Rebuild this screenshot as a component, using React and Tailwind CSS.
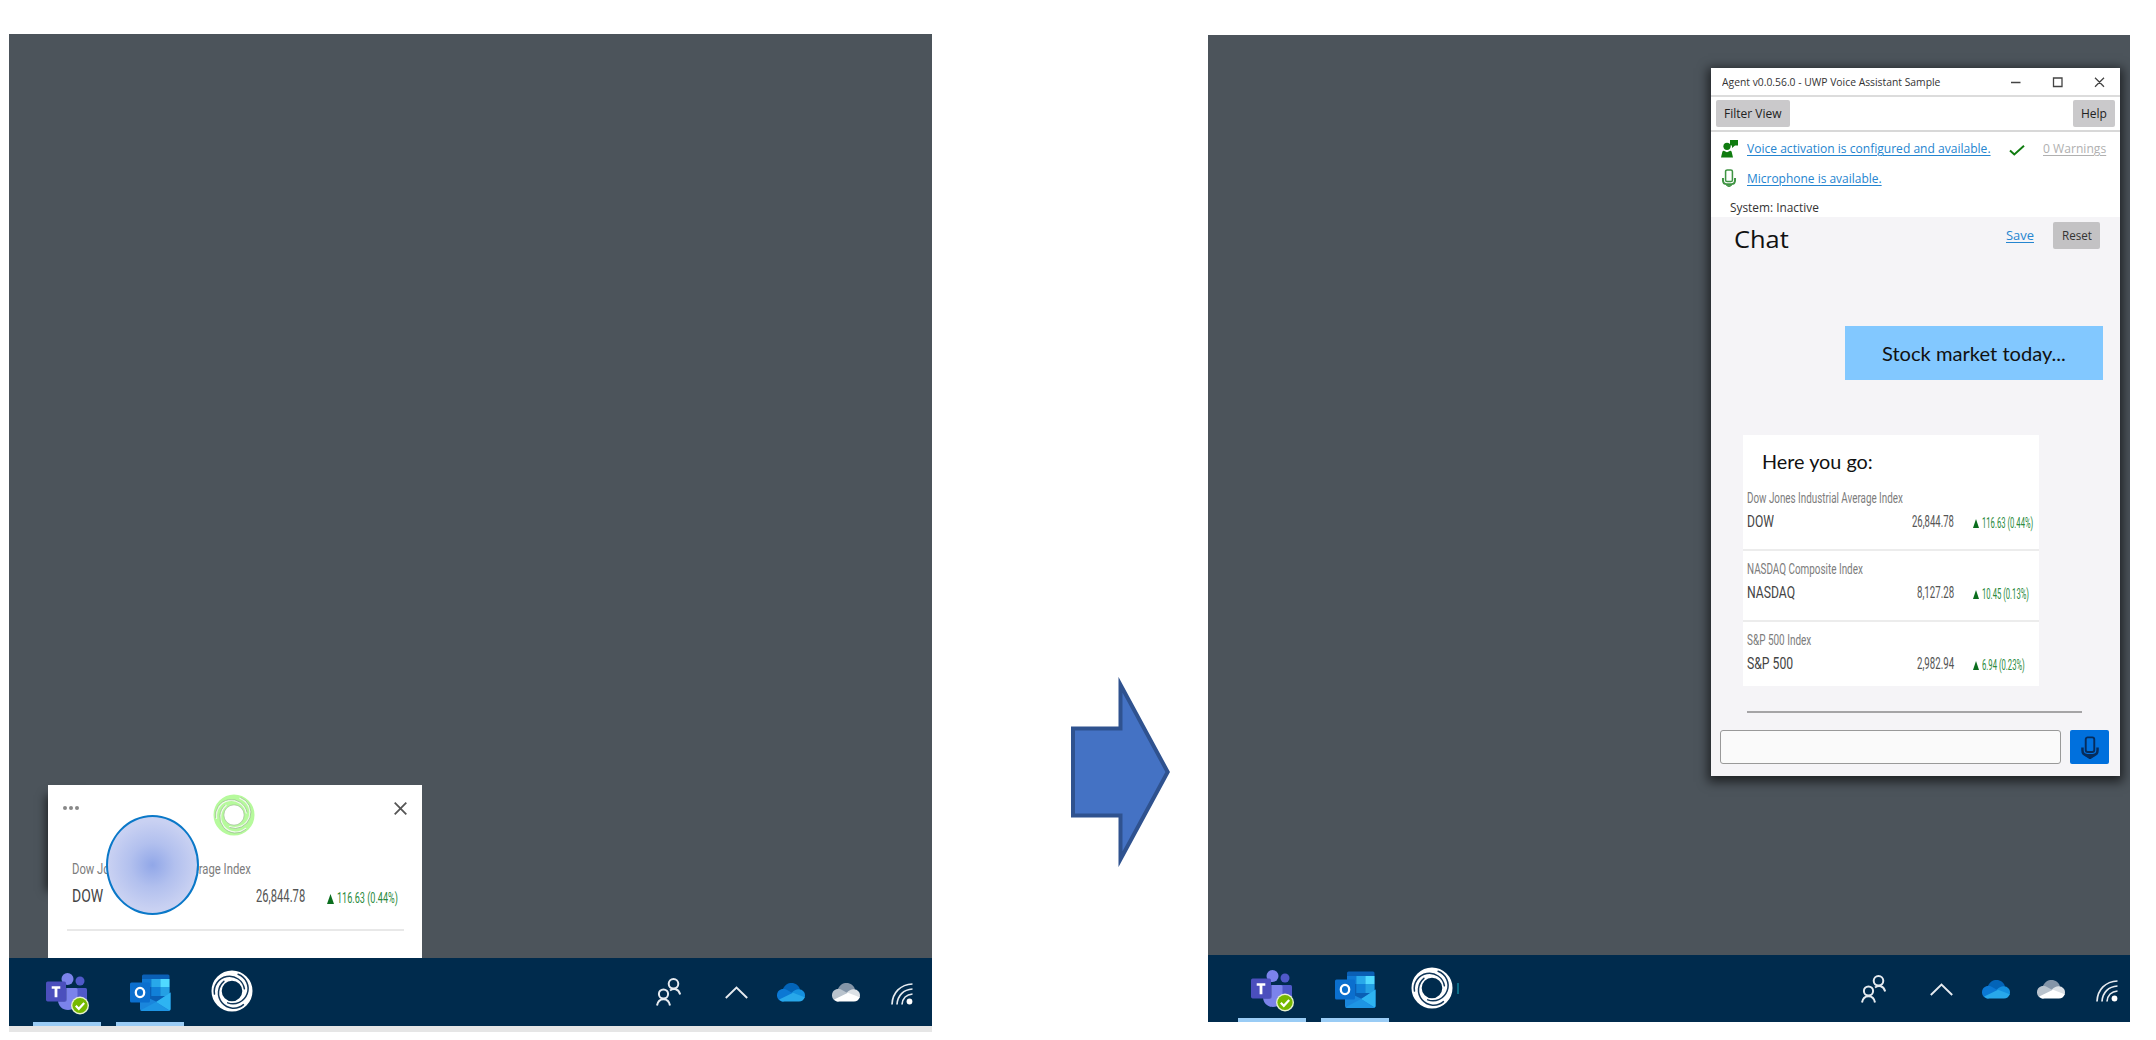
import { useLayoutEffect, useRef, useState } from "react";

// Text squeezed or stretched horizontally so that it fills its box exactly.
function Fit({ className = "", inner = "", children }) {
  const box = useRef(null);
  const text = useRef(null);
  const [scale, setScale] = useState(1);
  useLayoutEffect(() => {
    const measure = () => {
      const natural = text.current.offsetWidth;
      if (natural) setScale(box.current.offsetWidth / natural);
    };
    measure();
    document.fonts?.ready.then(measure);
  }, []);
  return (
    <span ref={box} className={`block shrink-0 whitespace-nowrap ${className}`}>
      <span ref={text} className={`inline-block origin-left align-top ${inner}`} style={{ transform: `scaleX(${scale})` }}>
        {children}
      </span>
    </span>
  );
}

// A solid hoop cut by three arcs that spiral from its rim to its hole.
function Ring({ className, color, cut, cutWidth, edge }) {
  return (
    <svg viewBox="0 0 42 42" className={className} fill="none">
      <circle cx="21" cy="21" r="15.400" stroke={color} strokeWidth="10.200" />
      <g stroke={cut} strokeWidth={cutWidth} strokeLinecap="round">
        {[-100, 20, 140].map((angle) => (
          <path key={angle} d="M21 3.200A15.200 15.200 0 0 1 21 33.600" transform={`rotate(${angle} 21 21)`} />
        ))}
      </g>
      <g stroke={edge} strokeWidth=".7">
        <circle cx="21" cy="21" r="10.200" />
        {[-100, 20, 140].map((angle) => (
          <path key={angle} d="M21 2.300A16 16 0 0 1 21 34.300" transform={`rotate(${angle} 21 21)`} />
        ))}
      </g>
    </svg>
  );
}

function Teams() {
  return (
    <svg viewBox="0 0 43 42" className="h-[42px] w-[43px]">
      <circle cx="34" cy="8" r="4.500" fill="#5059c9" />
      <path d="M29 15h10.500a1.500 1.500 0 0 1 1.500 1.500V26a7 7 0 0 1-12 4z" fill="#5059c9" />
      <circle cx="21.500" cy="6" r="6" fill="#7b83eb" />
      <path d="M13 15h17a1.500 1.500 0 0 1 1.500 1.500V27c0 6-4 10-9.500 10s-10-4-10-10z" fill="#7b83eb" />
      <path d="M12 15h9v11a3 3 0 0 1-3 3h-6z" fill="#4b53a8" opacity=".6" />
      <rect x="0" y="8.500" width="20" height="20" rx="1.700" fill="#4b4fbd" />
      <path d="M5.700 13.300h8.600v2.500h-2.900v8.400H8.600v-8.400H5.700z" fill="#fff" />
      <circle cx="34" cy="32.500" r="9" fill="#e8f2d0" />
      <circle cx="34" cy="32.500" r="7.600" fill="#76b900" />
      <path d="m29.800 32.800 3 3 5.400-5.800" fill="none" stroke="#fff" strokeWidth="2.200" />
    </svg>
  );
}

function Outlook() {
  return (
    <svg viewBox="0 0 41 38" className="h-[38px] w-[41px]">
      <path d="M13.500.5H38A1.500 1.500 0 0 1 39.500 2v26H12V2A1.500 1.500 0 0 1 13.500.5z" fill="#0a5fb5" />
      <path d="M12 5h9.300v8H12z" fill="#0f78d4" />
      <path d="M21.300 5h9v8h-9z" fill="#28a8ea" />
      <path d="M30.300 5h9.200v8h-9.200z" fill="#50d9ff" />
      <path d="M21.300 13h9v9h-9z" fill="#1180d8" />
      <path d="M30.300 13h9.200v9h-9.200z" fill="#24a0e4" />
      <path d="M10 20 27 28 40.500 18.500V35a2 2 0 0 1-2 2H12a2 2 0 0 1-2-2z" fill="#1a86dc" />
      <path d="M40.500 18.500V35a2 2 0 0 1-.8 1.600L26 28z" fill="#2eb4f2" />
      <path d="m10.500 36.300 15.500-8.300 13.500 8.700-1 .3H12z" fill="#1e95e4" />
      <rect x="0" y="8.500" width="20" height="20" rx="1.500" fill="#0b6fce" />
      <ellipse cx="10" cy="18.500" rx="4.200" ry="4.700" fill="none" stroke="#fff" strokeWidth="2.300" />
    </svg>
  );
}

function Cloud({ dark, mid, left, light }) {
  return (
    <svg viewBox="0 0 28 19" className="h-[19px] w-[28px]">
      <path d="M5.500 7C7.500 1.800 11 0 14.500 0c4 0 7.500 2.500 8.500 6.500L14 12z" fill={dark} />
      <path d="M6.500 18.500C2.500 18.500 0 15.500 0 12.200 0 8.500 2.800 6 6.200 6c2 0 3 .5 4.300 1.200L19 12z" fill={left} />
      <path d="M14.500 10C17 7 19.500 6 22 6.200c3.500.3 6 2.800 6 6.200 0 1-.3 2-.7 2.800z" fill={mid} />
      <path d="M2.200 16.500 16 9.800l11.700 4.400c-.8 2.600-3 4.400-5.700 4.400H6.500c-1.800 0-3.300-.9-4.300-2.100z" fill={light} />
    </svg>
  );
}

function Taskbar({ className, ringGap, sliver, trayPad }) {
  return (
    <div className={`flex shrink-0 bg-[#002b4d] ${className}`}>
      <div className="flex h-full w-[68px] flex-col items-center justify-between pt-[15px]">
        <Teams />
        <div className="h-[4px] w-full bg-[#9accf5]" />
      </div>
      <div className="ml-[15px] flex h-full w-[68px] flex-col items-center justify-between pt-[16px]">
        <Outlook />
        <div className="h-[4px] w-full bg-[#9accf5]" />
      </div>
      <Ring className={`mt-[12px] h-[42px] w-[42px] shrink-0 ${ringGap}`} color="#fff" cut="#12375a" cutWidth="1.5" edge="none" />
      <div className={`mt-[28px] ml-[4px] h-[11px] w-[2px] ${sliver}`} />
      <div className={`ml-auto flex h-full ${trayPad}`}>
        <svg viewBox="0 0 25 28" className="mt-[20px] h-[28px] w-[25px]" fill="none" stroke="#e6ebf0" strokeWidth="2">
          <circle cx="17.500" cy="5.800" r="4.800" />
          <path d="M14 12.500c3.500-2.500 8.500-2 10.200 4" />
          <circle cx="7.500" cy="16" r="4.600" />
          <path d="M1 27.500c1.500-8.500 11.500-8.500 13 0" />
        </svg>
        <svg viewBox="0 0 23 13" className="mt-[28px] ml-[44px] h-[13px] w-[23px]" fill="none" stroke="#e6ebf0" strokeWidth="1.900">
          <path d="m.8 12 10.700-10.500L22.200 12" />
        </svg>
        <div className="mt-[25px] ml-[29px]">
          <Cloud dark="#0364b8" left="#0b78d4" mid="#1490df" light="#28a8ea" />
        </div>
        <div className="mt-[25px] ml-[27px]">
          <Cloud dark="#8495a8" left="#b9c3cd" mid="#dce1e6" light="#fff" />
        </div>
        <svg viewBox="0 0 22 22" className="mt-[25px] ml-[31px] h-[22px] w-[22px]" fill="none" stroke="#e6ebf0" strokeWidth="1.700">
          <path d="M1 21.500C1.500 9.500 9.500 1.500 21.500 1M6 21.500C6.500 12.500 12.500 6.500 21.500 6M11 21.500c.5-6 4.500-10 10.500-10.500" />
          <circle cx="18.500" cy="18.500" r="2.900" fill="#fff" stroke="none" />
        </svg>
      </div>
    </div>
  );
}

function Mic({ className }) {
  return (
    <svg viewBox="0 0 16 20" className={className} fill="none" stroke="currentColor">
      <rect x="4.200" y="1" width="7.600" height="13" rx="1.800" strokeWidth="1.700" />
      <path d="M1.300 10v2.500c0 3 2 4.300 4.200 4.300h5c2.200 0 4.200-1.300 4.200-4.300V10" strokeWidth="2.200" />
      <path d="M5 18h6l-3 2z" fill="currentColor" strokeWidth="1" />
    </svg>
  );
}

function Stock({ className = "", name, nameW, ticker, tickerW, value, valueW, change, changeW }) {
  return (
    <div className={`flex shrink-0 flex-col pt-[10px] pl-[4px] font-[Roboto,sans-serif] ${className}`}>
      <Fit className={`h-[18px] text-[14.5px] leading-[18px] text-[#7c7c7c] ${nameW}`}>{name}</Fit>
      <div className="mt-[2px] flex h-[22px]">
        <div className="w-[160px]">
          <Fit className={`text-[17px] leading-[22px] text-[#444] ${tickerW}`}>{ticker}</Fit>
        </div>
        <div className="flex w-[47px] justify-end">
          <Fit className={`text-[17px] leading-[22px] text-[#555] ${valueW}`}>{value}</Fit>
        </div>
        <svg viewBox="0 0 7 9" className="mt-[9px] ml-[18.500px] h-[9px] w-[6px] shrink-0" preserveAspectRatio="none">
          <path d="M3.500 0 7 9H0z" fill="#0b6e1e" />
        </svg>
        <Fit className={`ml-[3px] text-[15px] leading-[27px] text-[#2a8a3c] ${changeW}`}>{change}</Fit>
      </div>
    </div>
  );
}

function Popup() {
  return (
    <div className="relative isolate ml-[39px] h-[173px] w-[374px] shrink-0">
      <div className="absolute top-[8px] left-0 -z-10 h-[96px] w-[40px] shadow-[-2px_2px_9px_0px_rgba(0,0,0,0.600)]" />
      <div className="flex h-full flex-col bg-white">
        <div className="flex h-[65px]">
          <div className="mt-[21px] ml-[15px] flex h-[4px] w-[150px] gap-[2.500px]">
            <i className="h-[3.500px] w-[3.500px] rounded-full bg-[#888]" />
            <i className="h-[3.500px] w-[3.500px] rounded-full bg-[#888]" />
            <i className="h-[3.500px] w-[3.500px] rounded-full bg-[#888]" />
          </div>
          <Ring className="mt-[9px] h-[42px] w-[42px]" color="#b6fa9c" cut="#f1fbec" cutWidth="1.6" edge="#98bd8c" />
          <svg viewBox="0 0 13 13" className="mt-[17px] ml-[139px] h-[13px] w-[13px]" stroke="#555" strokeWidth="1.800">
            <path d="m.7.7 11.600 11.600M12.300.7.7 12.300" />
          </svg>
        </div>
        <div className="flex flex-col pt-[11px] pl-[24px] font-[Roboto,sans-serif]">
          <Fit className="h-[18px] w-[179px] text-[14.5px] leading-[18px] text-[#7c7c7c]">Dow Jones Industrial Average Index</Fit>
          <div className="mt-[6px] flex h-[22px]">
            <div className="w-[184px]">
              <Fit className="w-[31px] text-[18.5px] leading-[22px] text-[#444]">DOW</Fit>
            </div>
            <Fit className="w-[49px] text-[18.5px] leading-[22px] text-[#555]">26,844.78</Fit>
            <svg viewBox="0 0 7 10" className="mt-[9px] ml-[22px] h-[10px] w-[7px] shrink-0">
              <path d="M3.500 0 7 10H0z" fill="#0b6e1e" />
            </svg>
            <Fit className="ml-[3px] w-[61px] text-[15.5px] leading-[27px] text-[#2a8a3c]">116.63 (0.44%)</Fit>
          </div>
        </div>
        <div className="mt-[22px] ml-[19px] h-[2px] w-[337px] bg-[#e8e8e8]" />
      </div>
      <div className="absolute top-[30px] left-[58px] h-[100px] w-[93px] rounded-[50%] border-2 border-[#0a78c8] bg-[radial-gradient(circle_closest-side,#91a7e8_0%,#b2c0ee_50%,#c9d1f2_100%)]" />
    </div>
  );
}

function AgentWindow() {
  return (
    <div className="ml-[503px] flex h-[708px] w-[409px] shrink-0 flex-col bg-white font-['Open_Sans',sans-serif] shadow-[0_3px_10px_3px_rgba(0,0,0,0.600)]">
      <div className="flex h-[29px] border-b-2 border-[#dcdcdc]">
        <Fit className="ml-[11px] w-[218px] text-[11px] leading-[27px] text-[#333]">Agent v0.0.56.0 - UWP Voice Assistant Sample</Fit>
        <svg viewBox="0 0 94 11" className="mt-[9px] ml-[71px] h-[11px] w-[94px]" fill="none" stroke="#444" strokeWidth="1.300">
          <path d="M0 5.500h9.500M42.500 1h8.500v8.500h-8.500zM84 .8l9 9M93 .8l-9 9" />
        </svg>
      </div>
      <div className="flex h-[35px] items-center justify-between border-b-2 border-[#d8d8d8] px-[5px] text-[12px] leading-[27px] text-[#222]">
        <div className="flex h-[27px] w-[74px] justify-center rounded-[2px] bg-[#cac9cb]">
          <Fit className="w-[58px]">Filter View</Fit>
        </div>
        <div className="flex h-[27px] w-[42px] justify-center rounded-[2px] bg-[#cac9cb]">
          <Fit className="w-[26px]">Help</Fit>
        </div>
      </div>
      <div className="flex h-[85px] flex-col pt-[5px] text-[12.5px] leading-[24px] text-[#2585d0]">
        <div className="flex h-[24px]">
          <svg viewBox="0 0 17 18" className="mt-[3px] ml-[10px] h-[18px] w-[17px]" fill="#107c10">
            <path d="M9 0h8v5.500h-3L11 8V5.500H9z" />
            <circle cx="6" cy="6.300" r="3.600" />
            <path d="M0 17.500 1.300 12c.2-.8.700-1.200 1.500-1.200l3.200 1.400 3.200-1.400c.8 0 1.300.4 1.500 1.200l1.300 5.500z" />
          </svg>
          <Fit className="ml-[9px] w-[244px]" inner="underline decoration-1 underline-offset-2">Voice activation is configured and available.</Fit>
          <svg viewBox="0 0 16 11" className="mt-[8px] ml-[18px] h-[11px] w-[16px]" fill="none" stroke="#107c10" strokeWidth="2">
            <path d="m1 5.500 4.300 4L15 .8" />
          </svg>
          <Fit className="ml-[18px] w-[63px] text-[#b0b0b0]" inner="underline decoration-1 underline-offset-2">0 Warnings</Fit>
        </div>
        <div className="mt-[6px] flex h-[24px]">
          <Mic className="mt-[2px] ml-[10px] h-[18px] w-[16px] text-[#3f9443]" />
          <Fit className="ml-[10px] w-[135px]" inner="underline decoration-1 underline-offset-2">Microphone is available.</Fit>
        </div>
        <Fit className="mt-[5px] ml-[19px] w-[89px] text-[12px] text-[#333]">System: Inactive</Fit>
      </div>
      <div className="flex flex-1 flex-col bg-[#f5f4f7]">
        <div className="flex h-[109px] pt-[5px] text-[12px] leading-[27px]">
          <Fit className="ml-[23px] w-[55px] text-[24.5px] leading-[34px] text-[#111]">Chat</Fit>
          <Fit className="ml-[217px] w-[28px] text-[#2585d0]" inner="underline decoration-1 underline-offset-2">Save</Fit>
          <div className="ml-[19px] flex h-[27px] w-[47px] justify-center rounded-[2px] bg-[#c3c2c4] text-[#333]">
            <Fit className="w-[30px]">Reset</Fit>
          </div>
        </div>
        <div className="ml-[134px] flex h-[54px] w-[258px] justify-center bg-[#82c8ff] font-[Lato,sans-serif] text-[20px] leading-[54px] text-[#111]">
          <Fit className="w-[184px]">Stock market today...</Fit>
        </div>
        <div className="mt-[55px] ml-[32px] flex h-[251px] w-[296px] flex-col bg-white">
          <Fit className="ml-[19px] h-[45px] w-[111px] font-[Lato,sans-serif] text-[20px] leading-[53px] text-[#111]">Here you go:</Fit>
          <Stock className="h-[69px]" name="Dow Jones Industrial Average Index" nameW="w-[156px]" ticker="DOW" tickerW="w-[27px]" value="26,844.78" valueW="w-[42px]" change="116.63 (0.44%)" changeW="w-[51px]" />
          <Stock className="h-[71px] border-t-2 border-[#ececec]" name="NASDAQ Composite Index" nameW="w-[116px]" ticker="NASDAQ" tickerW="w-[48px]" value="8,127.28" valueW="w-[37px]" change="10.45 (0.13%)" changeW="w-[47px]" />
          <Stock className="h-[66px] border-t-2 border-[#ececec]" name="S&P 500 Index" nameW="w-[64px]" ticker="S&P 500" tickerW="w-[46px]" value="2,982.94" valueW="w-[37px]" change="6.94 (0.23%)" changeW="w-[43px]" />
        </div>
        <div className="mt-[25px] ml-[36px] h-[2px] w-[335px] bg-[#a5a4a6]" />
        <div className="mt-[17px] ml-[9px] flex h-[34px] gap-[9px]">
          <div className="w-[341px] rounded-[3px] border-[1.500px] border-[#999] bg-[#fafafa]" />
          <div className="flex w-[39px] items-center justify-center rounded-[2px] bg-[#0070dd]">
            <Mic className="h-[23px] w-[18px] text-[#062c5c]" />
          </div>
        </div>
      </div>
    </div>
  );
}

export default function App() {
  return (
    <div className="flex h-[1040px] w-[2156px] items-start overflow-hidden bg-white">
      <div className="mt-[34px] ml-[9px] flex h-[998px] w-[923px] shrink-0 flex-col justify-end overflow-hidden border-b-[6px] border-[#e6e6e6] bg-[#4c545b]">
        <Popup />
        <Taskbar className="h-[68px] pl-[24px]" ringGap="ml-[27px]" sliver="bg-transparent" trayPad="pr-[19px]" />
      </div>
      <svg viewBox="0 0 99 190" className="mt-[677px] ml-[139px] h-[190px] w-[99px] shrink-0">
        <path d="M2 51.500H49.500V7.800L96.700 95 49.500 182.200V138.500H2z" fill="#4472c4" stroke="#2f528f" strokeWidth="4" strokeMiterlimit="10" />
      </svg>
      <div className="mt-[35px] ml-[38px] flex h-[987px] w-[922px] shrink-0 flex-col justify-between overflow-hidden bg-[#4c545b] pt-[33px]">
        <AgentWindow />
        <Taskbar className="h-[67px] pl-[30px]" ringGap="ml-[22px]" sliver="bg-[#0b6c86]" trayPad="pr-[12px]" />
      </div>
    </div>
  );
}
